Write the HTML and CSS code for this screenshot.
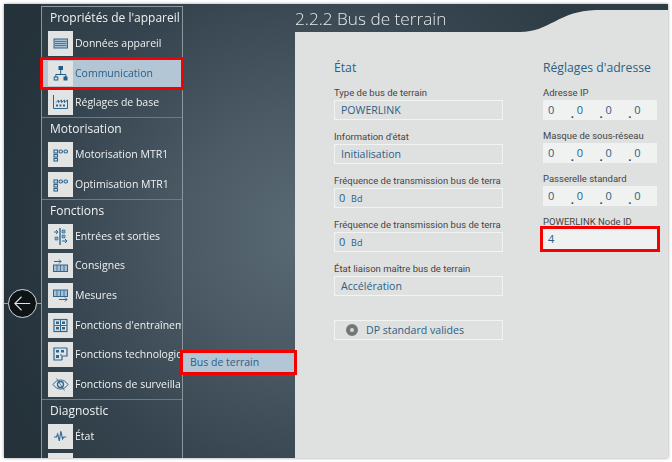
FILE: index.html
```html
<!DOCTYPE html>
<html lang="fr">
<head>
  <meta charset="UTF-8" />
  <title>Bus de terrain</title>
  <link rel="stylesheet" href="styles.css">
</head>
<body>
  <div class="app">
    <div class="rail">
      <span class="rail-line"></span>
      <button class="back">
        <svg viewBox="0 0 28 28" width="28" height="28"><path d="M22 14H6M13 7l-7 7 7 7" fill="none" stroke="#dfe3e5" stroke-width="1.1"/></svg>
      </button>
      <span class="rail-line"></span>
    </div>

    <nav class="sidebar">
      <section class="group">
        <h3>Propriétés de l'appareil</h3>
        <a class="item">
          <span class="ico"><svg viewBox="0 0 25 25"><rect x="6" y="8" width="13.5" height="9" fill="#a9c0d2" stroke="#2f6690"/><path d="M7 10.5h11.5M7 12.5h11.5M7 14.5h11.5" stroke="#2f6690" stroke-width=".8"/></svg></span>
          <span class="txt">Données appareil</span>
        </a>
        <a class="item selected">
          <span class="ico"><svg viewBox="0 0 25 25"><rect x="10.5" y="5" width="4.5" height="4" fill="#1f5d8a"/><path d="M12.7 9v4.5M7.8 16v-2.5h10V16" fill="none" stroke="#1f5d8a"/><rect x="6.2" y="16" width="3.6" height="3" fill="none" stroke="#1f5d8a"/><rect x="15.5" y="15.5" width="4" height="4" fill="#1f5d8a"/></svg></span>
          <span class="txt">Communication</span>
        </a>
        <a class="item">
          <span class="ico"><svg viewBox="0 0 25 25"><path d="M5.5 5v13.5h14V10l-3 2.5V10l-3 2.5V10l-3 2.5V10l-2.5 2.5" fill="none" stroke="#2f6690"/><path d="M8 14.5h2v2H8zM11.5 14.5h2v2h-2zM15 14.5h2v2h-2z" fill="#2f6690"/></svg></span>
          <span class="txt">Réglages de base</span>
        </a>
      </section>

      <section class="group">
        <h3>Motorisation</h3>
        <a class="item">
          <span class="ico"><svg viewBox="0 0 25 25"><g fill="none" stroke="#2f6690" stroke-width="1.1"><rect x="6" y="8" width="3.5" height="3"/><rect x="11" y="8" width="3.5" height="3" rx="1.5"/><rect x="16" y="8" width="3.5" height="3" rx="1.5"/><rect x="6" y="12.5" width="3.5" height="2.5"/><rect x="6" y="16.5" width="3.5" height="2.5"/></g></svg></span>
          <span class="txt">Motorisation MTR1</span>
        </a>
        <a class="item">
          <span class="ico"><svg viewBox="0 0 25 25"><g fill="none" stroke="#2f6690" stroke-width="1.1"><rect x="6" y="8" width="3.5" height="3"/><rect x="11" y="8" width="3.5" height="3" rx="1.5"/><rect x="16" y="8" width="3.5" height="3" rx="1.5"/><rect x="6" y="12.5" width="3.5" height="2.5"/><rect x="6" y="16.5" width="3.5" height="2.5"/></g></svg></span>
          <span class="txt">Optimisation MTR1</span>
        </a>
      </section>

      <section class="group">
        <h3>Fonctions</h3>
        <a class="item">
          <span class="ico"><svg viewBox="0 0 25 25"><path d="M12 4v17" stroke="#2f6690" stroke-width="1.4"/><path d="M6 8h4M8 6l2 2-2 2M14 17h5M17 15l2 2-2 2" fill="none" stroke="#2f6690"/><path d="M14 6h3v3h-3zM14 11h3v3h-3zM7 13h3v3H7z" fill="#7fa3bf" stroke="#2f6690" stroke-width=".6"/></svg></span>
          <span class="txt">Entrées et sorties</span>
        </a>
        <a class="item">
          <span class="ico"><svg viewBox="0 0 25 25"><path d="M6 8.5h7M11 6.5l2 2-2 2" fill="none" stroke="#2f6690"/><rect x="5.5" y="12" width="14" height="6.5" fill="#a9c0d2" stroke="#2f6690"/><path d="M9 12v6.5M12.5 12v6.5M16 12v6.5" stroke="#2f6690" stroke-width=".8"/></svg></span>
          <span class="txt">Consignes</span>
        </a>
        <a class="item">
          <span class="ico"><svg viewBox="0 0 25 25"><rect x="5.5" y="7" width="14" height="6.5" fill="#a9c0d2" stroke="#2f6690"/><path d="M9 7v6.5M12.5 7v6.5M16 7v6.5" stroke="#2f6690" stroke-width=".8"/><path d="M11 16.5h8M17 14.5l2 2-2 2" fill="none" stroke="#2f6690"/></svg></span>
          <span class="txt">Mesures</span>
        </a>
        <a class="item">
          <span class="ico"><svg viewBox="0 0 25 25"><rect x="6" y="6.5" width="13" height="12" fill="none" stroke="#2f6690" stroke-width="1.2"/><path d="M12.5 7v11M6.5 12.5h12" stroke="#2f6690"/><path d="M8 8.5h3v2.5H8zM14 8.5h3v2.5h-3zM8 14h3v2.5H8zM14 14h3v2.5h-3z" fill="#2f6690"/></svg></span>
          <span class="txt">Fonctions d'entraînement</span>
        </a>
        <a class="item">
          <span class="ico"><svg viewBox="0 0 25 25"><path d="M19 6H6v12h8" fill="none" stroke="#2f6690" stroke-width="1.2"/><path d="M19 6v8h-5v4" fill="none" stroke="#2f6690" stroke-width="1.2"/><path d="M8 8h3v2.5H8zM13 8h3v2.5h-3zM8 13h3v3H8z" fill="#2f6690"/><path d="M12 12h2v2h-2z" fill="#7fa3bf"/></svg></span>
          <span class="txt">Fonctions technologiques</span>
        </a>
        <a class="item">
          <span class="ico"><svg viewBox="0 0 25 25"><path d="M5 12.5c4-6 11-6 15 0-4 6-11 6-15 0z" fill="none" stroke="#2f6690"/><circle cx="12.5" cy="12.5" r="3" fill="none" stroke="#2f6690" stroke-width="1.3"/><path d="M8.5 6.5l8 12" stroke="#2f6690" stroke-width=".8"/></svg></span>
          <span class="txt">Fonctions de surveillance</span>
        </a>
      </section>

      <section class="group">
        <h3>Diagnostic</h3>
        <a class="item">
          <span class="ico"><svg viewBox="0 0 25 25"><path d="M6 13h2.5l1.2-3 1.6 7 1.6-10 1.6 8 1.2-2h2.5" fill="none" stroke="#2f6690" stroke-width="1.1"/></svg></span>
          <span class="txt">État</span>
        </a>
        <a class="item">
          <span class="ico"></span>
        </a>
      </section>
    </nav>

    <div class="sub">
      <a class="sub-item">Bus de terrain</a>
    </div>

    <main class="main">
      <header class="title-bar">
        <h1>2.2.2 Bus de terrain</h1>
        <svg class="curve" viewBox="0 0 148 24" width="148" height="24" preserveAspectRatio="none"><path d="M0 24C30 24 38 3 76 2H148V24z" fill="#dfe1e0"/></svg>
      </header>

      <div class="panel">
        <div class="col left">
          <h2>État</h2>
          <label>Type de bus de terrain</label>
          <div class="field">POWERLINK</div>
          <label>Information d'état</label>
          <div class="field">Initialisation</div>
          <label>Fréquence de transmission bus de terra</label>
          <div class="field small"><b>0</b> <i>Bd</i></div>
          <label>Fréquence de transmission bus de terra</label>
          <div class="field small"><b>0</b> <i>Bd</i></div>
          <label>État liaison maître bus de terrain</label>
          <div class="field">Accélération</div>
          <div class="field radio-btn"><span class="radio"></span>DP standard valides</div>
        </div>

        <div class="col right">
          <h2>Réglages d'adresse</h2>
          <label>Adresse IP</label>
          <div class="input ip"><span>0</span><em>.</em><span>0</span><em>.</em><span>0</span><em>.</em><span>0</span></div>
          <label>Masque de sous-réseau</label>
          <div class="input ip"><span>0</span><em>.</em><span>0</span><em>.</em><span>0</span><em>.</em><span>0</span></div>
          <label>Passerelle standard</label>
          <div class="input ip"><span>0</span><em>.</em><span>0</span><em>.</em><span>0</span><em>.</em><span>0</span></div>
          <label>POWERLINK Node ID</label>
          <div class="input marked">4</div>
        </div>
      </div>
    </main>
  </div>
</body>
</html>
```

FILE: styles.css
```css
* {
  box-sizing: border-box;
}

html, body {
  height: 100%;
}

body {
  margin: 0;
  padding: 4px;
  background: #fff;
  font-family: "Open Sans", sans-serif;
  overflow: hidden;
}

.app {
  display: flex;
  height: 454px;
  background: radial-gradient(circle 340px at 300px 228px, #5a6a75 0%, #4b5a64 35%, #35444e 75%, #2e3c45 100%);
  box-shadow: 0 0 3px rgba(0, 0, 0, 0.4);
  overflow: hidden;
  filter: blur(0.3px);
}

.rail {
  width: 37px;
  flex: none;
  display: flex;
  align-items: center;
  padding-top: 144px;
  background: rgba(15, 25, 32, 0.28);
}

.rail-line {
  flex: 1;
  height: 1px;
  background: #9aa5ab;
}

.back {
  width: 29px;
  height: 29px;
  flex: none;
  padding: 0;
  border: 1px solid #d5dadd;
  border-radius: 50%;
  background: #0e1316;
}

.back svg {
  display: block;
  width: 27px;
  height: 27px;
}

.sidebar {
  width: 142px;
  flex: none;
  margin-top: 2px;
  border: 1px solid #8b969d;
  border-bottom: none;
  color: #eef1f2;
}

.group {
  border-bottom: 1px solid #6f7b83;
}

.group h3 {
  margin: 0;
  height: 23px;
  padding-left: 8px;
  font-size: 12px;
  line-height: 21px;
  font-weight: 400;
  white-space: nowrap;
  overflow: hidden;
}

.item {
  display: flex;
  align-items: center;
  height: 27px;
  margin: 0 1px 2.6px;
  padding-left: 5px;
  font-size: 10.5px;
}

.item:last-child {
  margin-bottom: 1px;
}

.ico {
  width: 25px;
  height: 25px;
  flex: none;
  background: #e2e4e4;
}

.ico svg {
  display: block;
  width: 25px;
  height: 25px;
}

.txt {
  flex: 1;
  min-width: 0;
  padding: 0 0 1px 2px;
  white-space: nowrap;
  overflow: hidden;
}

.selected {
  position: relative;
  background: #b3c6d5;
  color: #2b5f86;
  outline: 3px solid #f40000;
}

.sub {
  width: 112px;
  flex: none;
  padding-top: 349px;
}

.sub-item {
  display: block;
  position: relative;
  z-index: 1;
  width: 111px;
  height: 19px;
  padding-left: 7px;
  background: #b3c6d5;
  color: #2b5f86;
  font-size: 10.5px;
  line-height: 19px;
  outline: 3px solid #f40000;
}

.main {
  flex: 1;
  display: flex;
  flex-direction: column;
}

.title-bar {
  position: relative;
  height: 28px;
  flex: none;
}

.title-bar h1 {
  margin: 0;
  font-size: 17.2px;
  line-height: 30px;
  font-weight: 300;
  color: #e6eaec;
  white-space: nowrap;
}

.curve {
  position: absolute;
  right: 0;
  bottom: 0;
  display: block;
}

.panel {
  flex: 1;
  display: flex;
  gap: 40px;
  padding: 26px 0 0 39px;
  background: #dfe1e0;
}

.col.left {
  width: 169px;
}

.col.right {
  width: 114px;
}

.col h2 {
  margin: 0 0 7px;
  font-size: 12.2px;
  line-height: 20px;
  font-weight: 400;
  color: #2b5f86;
  white-space: nowrap;
}

.col label {
  display: block;
  height: 14px;
  margin-bottom: 1px;
  font-family: Roboto, sans-serif;
  font-size: 9.5px;
  line-height: 15px;
  color: #444;
  white-space: nowrap;
}

.field {
  height: 20px;
  margin-bottom: 9px;
  padding-left: 6px;
  border: 1px solid #f2f3f3;
  font-size: 10.6px;
  line-height: 18px;
  color: #2b5f86;
}

.field b {
  font-weight: 400;
  font-size: 11px;
  margin-right: 3px;
}

.field i {
  font-style: normal;
  font-size: 9px;
}

.field.small {
  padding-left: 4px;
}

.radio-btn {
  display: flex;
  align-items: center;
  margin-top: 24px;
  padding-left: 11px;
}

.radio {
  width: 12px;
  height: 12px;
  margin-right: 8px;
  border: 4px solid #747677;
  border-radius: 50%;
  background: #d7d9d9;
}

.input {
  height: 20px;
  margin-bottom: 8px;
  padding-left: 5px;
  background: #f0f1f1;
  font-size: 11px;
  line-height: 19px;
  color: #2b5f86;
}

.ip {
  display: flex;
}

.ip span {
  width: 23px;
}

.ip em {
  width: 6px;
  font-style: normal;
  font-weight: 700;
  line-height: 27px;
  color: #1e4560;
}

.marked {
  outline: 3px solid #f40000;
}
```
